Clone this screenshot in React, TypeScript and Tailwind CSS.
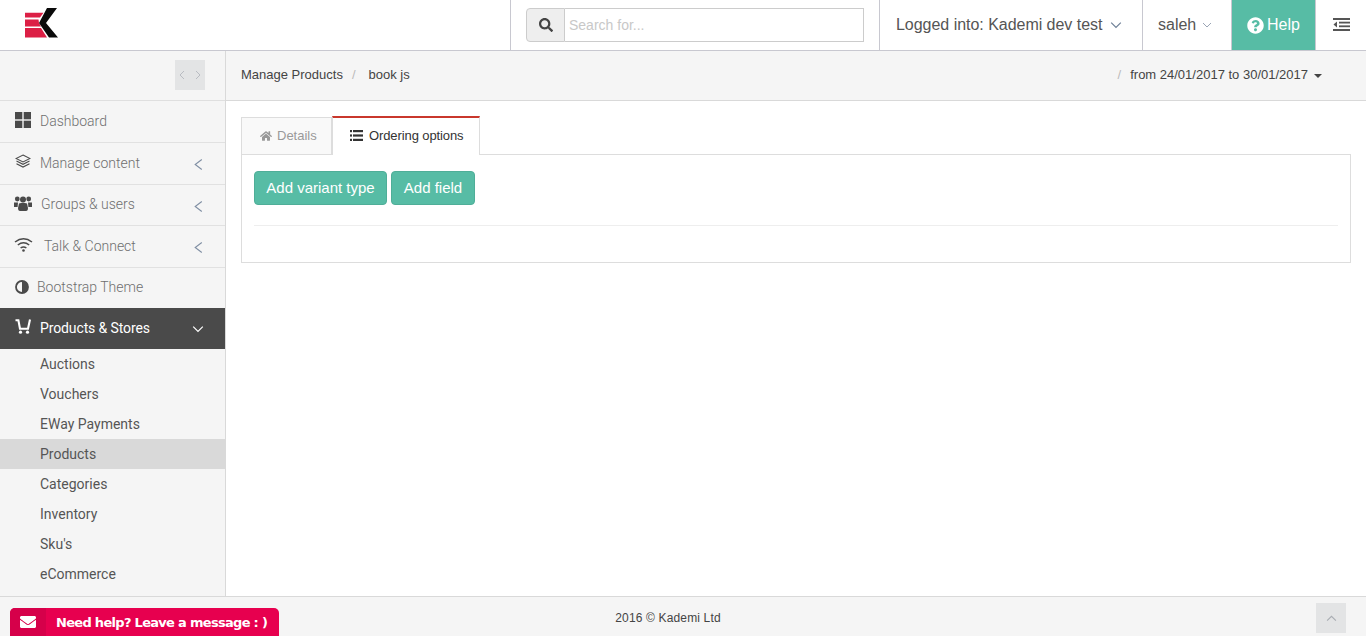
import React from "react";
import { FaSearch, FaQuestionCircle, FaHome, FaEnvelope } from "react-icons/fa";

const Chev = ({ dir, className = "", size = 10 }: { dir: "l" | "r" | "d" | "u" | "L"; className?: string; size?: number }) => {
  const d = { l: "M7 1 L3 5 L7 9", r: "M3 1 L7 5 L3 9", d: "M1 3 L5 7 L9 3", u: "M1 7 L5 3 L9 7", L: "M8 0.5 L2 5 L8 9.5" }[dir];
  return (
    <svg width={size} height={size} viewBox="0 0 10 10" fill="none" stroke="currentColor" strokeWidth="1" className={className}>
      <path d={d} />
    </svg>
  );
};

const Logo = () => (
  <svg width="34" height="30" viewBox="0 0 34 30">
    <path d="M0 4.7 H18.5 L15 9.5 H0Z M0 11.5 H13.5 L14 15 L16 18.5 H0Z M0 20 H16 L22 29.5 H0Z" fill="#dc1f45" />
    <path d="M22 0 H32 L21 15 L33 29.5 H24 L14 15Z" fill="#0a0a0a" />
  </svg>
);

const Grid = () => (
  <svg width="16" height="16" viewBox="0 0 16 16" fill="#4a4a4a">
    <rect x="0" y="0" width="7.3" height="7.3" />
    <rect x="8.7" y="0" width="7.3" height="7.3" />
    <rect x="0" y="8.7" width="7.3" height="7.3" />
    <rect x="8.7" y="8.7" width="7.3" height="7.3" />
  </svg>
);

const Layers = () => (
  <svg width="16" height="15" viewBox="0 0 16 15" fill="none" stroke="#4a4a4a" strokeWidth="1.1">
    <path d="M8 1 L15 4.5 L8 8 L1 4.5Z" />
    <path d="M1.5 7 L8 10.3 L14.5 7" />
    <path d="M1.5 9.8 L8 13.1 L14.5 9.8" />
  </svg>
);

const Users = () => (
  <svg width="18" height="15" viewBox="0 0 18 15" fill="#4a4a4a" className="shrink-0">
    <circle cx="3.3" cy="3" r="2.4" />
    <circle cx="14.7" cy="3" r="2.4" />
    <circle cx="9" cy="3.6" r="3" />
    <path d="M0 6.5 H4 L3.6 11 H0Z" />
    <path d="M18 6.5 H14 L14.4 11 H18Z" />
    <path d="M5 7.5 Q9 6 13 7.5 L14 12 Q14 15 12 15 H6 Q4 15 4 12Z" />
  </svg>
);

const Wifi = () => (
  <svg width="19" height="15" viewBox="0 0 19 15" fill="none" stroke="#4a4a4a" strokeWidth="1.5" className="shrink-0">
    <path d="M1 5 Q9.5 -1.5 18 5" />
    <path d="M3.8 8 Q9.5 3.5 15.2 8" />
    <path d="M6.6 11 Q9.5 8.8 12.4 11" />
    <circle cx="9.5" cy="13.5" r="1.3" fill="#4a4a4a" stroke="none" />
  </svg>
);

const Adjust = () => (
  <svg width="14" height="14" viewBox="0 0 14 14" className="mr-[8px] shrink-0">
    <circle cx="7" cy="7" r="6" fill="none" stroke="#4a4a4a" strokeWidth="1.8" />
    <path d="M7 1 A6 6 0 0 1 7 13Z" fill="#4a4a4a" />
  </svg>
);

const Cart = () => (
  <svg width="17" height="15" viewBox="0 0 17 15" fill="none" stroke="#fff" strokeWidth="2.1">
    <path d="M0.5 1.2 H3.4 L5 9.7 H13 L15 0.5" />
    <circle cx="5.5" cy="13.2" r="1.6" fill="#fff" stroke="none" />
    <circle cx="12.5" cy="13.2" r="1.6" fill="#fff" stroke="none" />
  </svg>
);

const Dedent = () => (
  <svg width="17" height="13" viewBox="0 0 17 13" fill="#555">
    <rect x="0" y="0" width="17" height="2" />
    <rect x="6" y="3.7" width="11" height="1.8" />
    <rect x="6" y="7.4" width="11" height="1.8" />
    <path d="M4 3.5 V9.5 L0.5 6.5Z" />
    <rect x="0" y="11" width="17" height="2" />
  </svg>
);

const ListIcon = () => (
  <svg width="13" height="11" viewBox="0 0 13 11" fill="#333">
    <rect x="0" y="0" width="2" height="2.2" />
    <rect x="3" y="0" width="10" height="2.2" />
    <rect x="0" y="4.4" width="2" height="2.2" />
    <rect x="3" y="4.4" width="10" height="2.2" />
    <rect x="0" y="8.8" width="2" height="2.2" />
    <rect x="3" y="8.8" width="10" height="2.2" />
  </svg>
);

const NavRow = ({ icon, label, gap, h, chev }: { icon: React.ReactNode; label: string; gap: string; h: string; chev?: boolean }) => (
  <div className={`flex items-center pl-[15px] pr-[21px] border-b border-[#e1e1e1] font-light text-[#6f6f6f] ${h}`}>
    <span className={`flex w-[16px] -mt-1 justify-center ${gap}`}>{icon}</span>
    <span className="flex-1 -mt-px">{label}</span>
    {chev && <Chev dir="L" className="text-[#7f8ea3] mt-[2px]" size={11} />}
  </div>
);

const subs = ["Auctions", "Vouchers", "EWay Payments", "Products", "Categories", "Inventory", "Sku's", "eCommerce"];

export default function App() {
  return (
    <div className="relative h-[636px] w-[1366px] overflow-hidden flex flex-col bg-white text-[14px] font-['Liberation_Sans',Arial,sans-serif] text-[#444]">
      <header className="flex h-[51px] shrink-0 border-b border-[#c8c8d0] bg-white">
        <div className="w-[511px] border-r border-[#c8c8d0] pl-[25px] pt-[8px]">
          <Logo />
        </div>
        <div className="w-[369px] border-r border-[#c8c8d0] pl-[15px] pt-[8px]">
          <div className="flex h-[34px] w-[338px]">
            <span className="flex w-[39px] items-center justify-center rounded-l-[4px] border border-[#ccc] bg-[#eee] text-[#444] text-[14px]">
              <FaSearch />
            </span>
            <span className="flex flex-1 items-center border border-l-0 border-[#ccc] pl-[4px] text-[#c8c8c8]">Search for...</span>
          </div>
        </div>
        <div className="flex w-[263px] items-center gap-[8px] border-r border-[#c8c8d0] pl-[16px] text-[16px] text-[#555]">
          <span className="tracking-[-0.03px]">Logged into: Kademi dev test</span>
          <Chev dir="d" className="text-[#6d7f96]" size={12} />
        </div>
        <div className="flex w-[88px] items-center gap-[6px] pl-[15px] text-[16px] text-[#555]">
          saleh
          <Chev dir="d" className="text-[#9aa5b5]" size={10} />
        </div>
        <div className="flex w-[85px] items-center gap-[3px] border-x border-[#c8c8d0] bg-[#57bca5] pl-[15px] text-[16px] text-white">
          <FaQuestionCircle className="text-[17px]" />
          Help
        </div>
        <div className="flex flex-1 items-center pl-[17px] pb-[2px]">
          <Dedent />
        </div>
      </header>

      <div className="flex h-[545px] shrink-0">
        <aside className="w-[226px] shrink-0 border-r border-[#d9d9d9] bg-[#f5f5f5] font-['Roboto',sans-serif] text-[14px]">
          <div className="flex h-[50px] items-center justify-end border-b border-[#dfdfdf] pr-[20px] pb-[1px]">
            <div className="flex h-[30px] w-[30px] items-center justify-center gap-[6px] bg-[#e3e4e5] text-[#b9bcc2]">
              <Chev dir="l" />
              <Chev dir="r" />
            </div>
          </div>
          <NavRow icon={<Grid />} label="Dashboard" gap="mr-[9px]" h="h-[42px]" />
          <NavRow icon={<Layers />} label="Manage content" gap="mr-[9px]" h="h-[42px]" chev />
          <NavRow icon={<Users />} label="Groups & users" gap="mr-[10px]" h="h-[41px]" chev />
          <NavRow icon={<Wifi />} label="Talk & Connect" gap="mr-[13px]" h="h-[42px]" chev />
          <div className="flex h-[40px] items-center pl-[15px] pb-[2px] font-light text-[#6f6f6f]">
            <Adjust />
            Bootstrap Theme
          </div>
          <div className="flex h-[41px] items-center bg-[#4a4a4a] pl-[15px] pr-[21px] text-white">
            <span className="mr-[8px] flex -mt-1"><Cart /></span>
            <span className="flex-1 -mt-px tracking-[-0.12px]">Products & Stores</span>
            <Chev dir="d" size={12} />
          </div>
          {subs.map((s) => (
            <div key={s} className={`flex h-[30px] items-center pl-[40px] text-[#555] ${s === "Products" ? "bg-[#d9d9d9] text-[#333]" : ""}`}>
              {s}
            </div>
          ))}
        </aside>

        <main className="flex-1 min-w-0">
          <div className="flex h-[50px] items-center justify-between border-b border-[#d9d9d9] bg-[#f5f5f5] pl-[15px] pr-[44px] pb-[2px] text-[13px] text-[#444]">
            <div className="flex">
              <span>Manage Products</span>
              <span className="mx-[9px] text-[#bbb]">/</span>
              <span className="ml-[4px]">book js</span>
            </div>
            <div className="flex items-center">
              <span className="mr-[9px] text-[#bbb]">/</span>
              <span>from 24/01/2017 to 30/01/2017</span>
              <span className="ml-[6px] mt-[2px] h-0 w-0 border-x-[4px] border-t-[4px] border-x-transparent border-t-[#444]" />
            </div>
          </div>

          <div className="px-[15px] pt-[15px]">
            <div className="relative z-10 flex h-[39px] text-[13px] -mb-px">
              <div className="mt-px flex h-[38px] w-[91px] items-center gap-[5px] border border-[#ddd] bg-[#f9f9f9] pb-[1px] pl-[18px] text-[#999]">
                <FaHome className="text-[12px]" />
                Details
              </div>
              <div className="flex h-[39px] w-[148px] items-center gap-[6px] border-x border-[#ddd] border-t-2 border-t-[#c9372c] bg-white pb-[2px] pl-[17px] text-[#333]">
                <ListIcon />
                <span className="tracking-[-0.1px]">Ordering options</span>
              </div>
            </div>
            <div className="h-[109px] border border-[#ddd] px-[12px] pt-[16px]">
              <div className="flex gap-[4px] border-b border-[#eee] pb-[20px] text-[15px] text-white">
                <span className="flex h-[34px] w-[133px] items-center justify-center rounded-[4px] border border-[#4fae98] bg-[#57bca5]">Add variant type</span>
                <span className="flex h-[34px] w-[84px] items-center justify-center rounded-[4px] border border-[#4fae98] bg-[#57bca5]">Add field</span>
              </div>
            </div>
          </div>
        </main>
      </div>

      <footer className="relative flex h-[40px] shrink-0 items-center justify-center border-t border-[#d9d9d9] bg-[#f5f5f5] pr-[30px] text-[12px] text-[#444]">
        <span className="mt-[3px] tracking-[0.15px]">2016 © Kademi Ltd</span>
        <div className="absolute right-[20px] top-[6px] flex h-[30px] w-[30px] items-center justify-center bg-[#e3e4e5] text-[#a9adb3]">
          <Chev dir="u" size={11} />
        </div>
      </footer>

      <div className="absolute bottom-0 left-[10px] flex h-[28px] w-[269px] overflow-hidden rounded-t-[5px] bg-[#e7004f] font-['DejaVu_Sans',Verdana,sans-serif] text-[13px] font-bold text-white">
        <span className="flex w-[36px] items-center justify-center bg-[#d6004a] text-[16px]">
          <FaEnvelope />
        </span>
        <span className="flex items-center pl-[10px] pt-[2px] tracking-[-0.7px] whitespace-nowrap">Need help? Leave a message : )</span>
      </div>
    </div>
  );
}
